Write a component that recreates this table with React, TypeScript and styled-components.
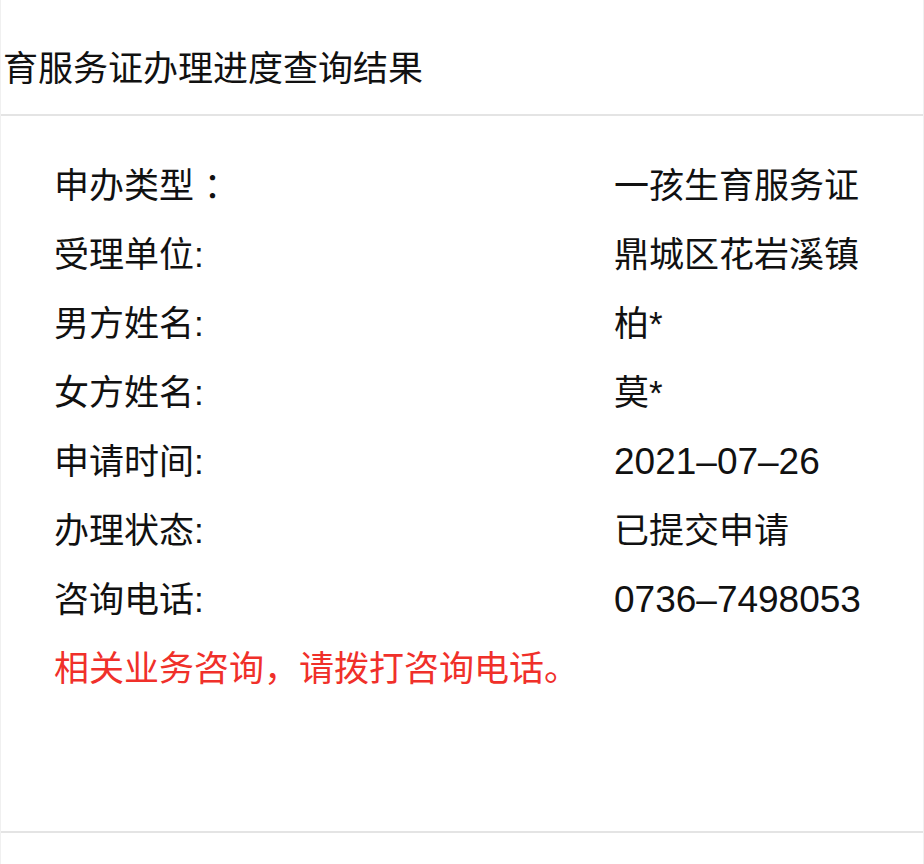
import React from "react";
import styled, { createGlobalStyle } from "styled-components";

const Global = createGlobalStyle`
  html, body {
    margin: 0;
    padding: 0;
    background: #ffffff;
  }
  body {
    font-family: "Liberation Sans", "Noto Sans CJK SC", sans-serif;
    color: #000000;
  }
`;

const Page = styled.div`
  width: 924px;
  min-height: 864px;
  box-sizing: border-box;
  border-left: 1px solid #f0f0f0;
  border-right: 1px solid #f0f0f0;
  background: #ffffff;
`;

const Header = styled.div`
  height: 116px;
  box-sizing: border-box;
  padding: 51px 0 0 2px;
  border-bottom: 2px solid #e4e4e4;
  overflow: hidden;
  white-space: nowrap;
`;

const Title = styled.h1`
  margin: 0;
  font-size: 35px;
  line-height: 35px;
  font-weight: 400;
  color: #111111;
`;

const Body = styled.div`
  padding: 35px 0 128px 53px;
  border-bottom: 2px solid #e4e4e4;
`;

const Row = styled.div`
  display: grid;
  grid-template-columns: 560px 1fr;
  height: 69px;
  align-items: center;
  font-size: 35px;
  line-height: 69px;
  color: #111111;
  white-space: nowrap;
`;

const Label = styled.span``;

const Value = styled.span<{ $numeric?: boolean }>`
  font-size: ${(p) => (p.$numeric ? "37px" : "35px")};
`;

const Notice = styled.p`
  margin: 0;
  height: 69px;
  font-size: 35px;
  line-height: 69px;
  color: #f0302a;
  white-space: nowrap;
`;

const rows: [string, string, boolean][] = [
  ["申办类型 ：", "一孩生育服务证", false],
  ["受理单位:", "鼎城区花岩溪镇", false],
  ["男方姓名:", "柏*", false],
  ["女方姓名:", "莫*", false],
  ["申请时间:", "2021–07–26", true],
  ["办理状态:", "已提交申请", false],
  ["咨询电话:", "0736–7498053", true],
];

export default function App() {
  return (
    <>
      <Global />
      <Page>
        <Header>
          <Title>育服务证办理进度查询结果</Title>
        </Header>
        <Body>
          {rows.map(([l, v, n]) => (
            <Row key={l}>
              <Label>{l}</Label>
              <Value $numeric={n}>{v}</Value>
            </Row>
          ))}
          <Notice>相关业务咨询，请拨打咨询电话。</Notice>
        </Body>
      </Page>
    </>
  );
}
